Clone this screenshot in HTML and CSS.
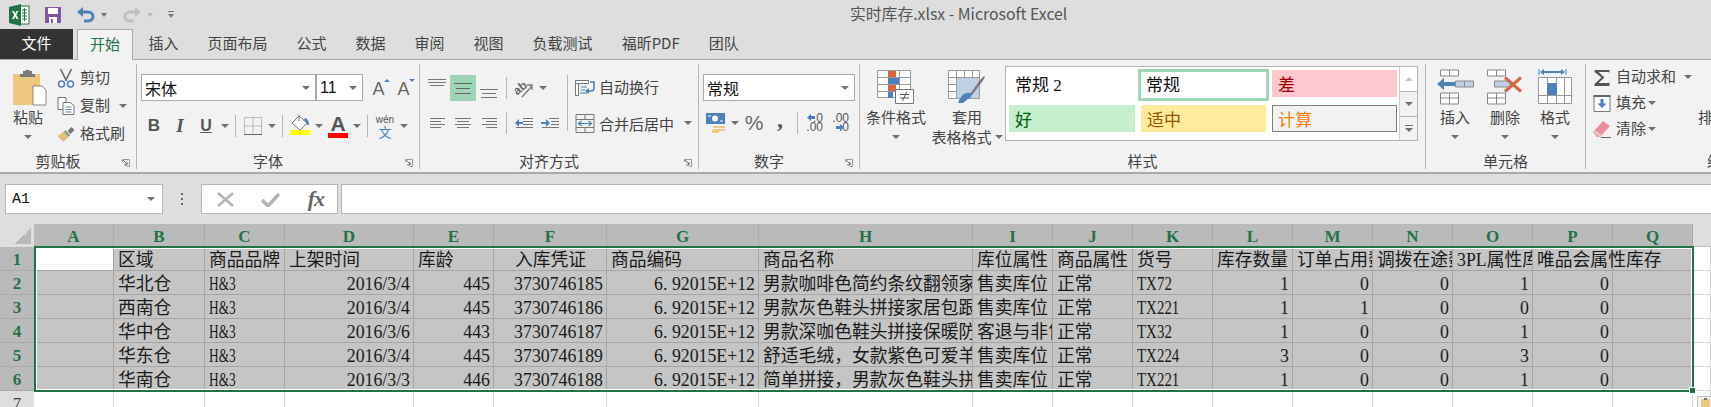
FILE: index.html
```html
<!DOCTYPE html>
<html lang="zh-CN">
<head>
  <meta charset="UTF-8" />
  <title>实时库存.xlsx - Microsoft Excel</title>
  <link rel="stylesheet" href="styles.css">
</head>
<body>
  <svg class="defs" width="0" height="0">
    <symbol id="launch" viewBox="0 0 8 8"><path d="M.5 3V.5H7.5V7.5H5" fill="none" stroke="#999"/><path d="M1 1l4 4M5 3v3H2" fill="none" stroke="#666"/></symbol>
  </svg>

  <header class="titlebar">
    <svg class="qa-excel" width="22" height="22" viewBox="0 0 22 22"><path d="M10 2h10v18H10z" fill="#fff" stroke="#217346"/><path d="M13 6h5M13 9h5M13 12h5M13 15h5M15.5 4v13" stroke="#217346"/><path d="M0 3l12-3v22L0 19z" fill="#217346"/><path d="M3 7l2.2 4L3 15h2l1.3-2.6L7.6 15h2L7.300 11l2.200-4h-2L6.300 9.600 5 7z" fill="#fff"/></svg>
    <svg class="qa-save" width="16" height="16" viewBox="0 0 16 16"><path d="M0 0h16v16H0z" fill="#8456a8"/><path d="M3 1h10v6H3z" fill="#fff"/><path d="M4 10h8v6H4z" fill="#fff"/><path d="M6 12h2v4H6z" fill="#8456a8"/></svg>
    <svg class="qa-undo" width="18" height="16" viewBox="0 0 18 16"><path d="M5 5h6c3 0 5 2 5 4.500S14 14 11 14H7" fill="none" stroke="#4d82b8" stroke-width="3"/><path d="M0 5l6-5v10z" fill="#4d82b8"/></svg>
    <i class="caret qa-caret"></i>
    <svg class="qa-redo" width="18" height="16" viewBox="0 0 18 16"><path d="M13 5H7C4 5 2 7 2 9.500S4 14 7 14h4" fill="none" stroke="#c0c0c0" stroke-width="3"/><path d="M18 5l-6-5v10z" fill="#c0c0c0"/></svg>
    <i class="caret qa-caret qa-caret-off"></i>
    <svg class="qa-custom" width="6" height="7" viewBox="0 0 6 7"><path d="M0 .5h6" stroke="#777"/><path d="M0 3h6L3 7z" fill="#777"/></svg>
    <div class="doc-title">实时库存.xlsx - Microsoft Excel</div>
  </header>

  <nav class="tabs">
    <div class="tab tab-file">文件</div>
    <div class="tab tab-on">开始</div>
    <div class="tab">插入</div>
    <div class="tab">页面布局</div>
    <div class="tab">公式</div>
    <div class="tab">数据</div>
    <div class="tab">审阅</div>
    <div class="tab">视图</div>
    <div class="tab">负载测试</div>
    <div class="tab">福昕PDF</div>
    <div class="tab">团队</div>
  </nav>

  <section class="ribbon">
    <div class="group g-clip">
      <div class="group-body clip-body">
        <div class="big-btn paste-btn">
          <svg width="34" height="38" viewBox="0 0 34 38"><path d="M0 6h27v31H0z" fill="#edc87e"/><path d="M10 3h2a3 3 0 0 1 5 0h2v3h3v3H7V6h3z" fill="#7a7a7a"/><path d="M20 18h9l4 4v15H20z" fill="#fff" stroke="#888"/></svg>
          <span class="big-label">粘贴</span>
          <i class="caret"></i>
        </div>
        <div class="small-col">
          <div class="small-btn">
            <svg width="17" height="19" viewBox="0 0 17 19"><path d="M3 0l6 12M14 0L8 12" stroke="#666" stroke-width="1.600" fill="none"/><circle cx="4" cy="15" r="3" fill="none" stroke="#4d82b8" stroke-width="1.500"/><circle cx="13" cy="15" r="3" fill="none" stroke="#4d82b8" stroke-width="1.500"/></svg>
            <span>剪切</span>
          </div>
          <div class="small-btn">
            <svg width="17" height="18" viewBox="0 0 17 18"><path d="M.5.500h8v12h-8z" fill="#fff" stroke="#777"/><path d="M5.500 5.500h7l4 3v9h-11z" fill="#fff" stroke="#777"/><path d="M8 10h6M8 12.500h6M8 15h6" stroke="#4d82b8"/></svg>
            <span>复制</span><i class="caret copy-caret"></i>
          </div>
          <div class="small-btn">
            <svg width="17" height="15" viewBox="0 0 17 15"><path d="M0 9l6 6 5-5-5-5z" fill="#e2bd7c"/><path d="M6 5l5 5 2-2-5-5z" fill="#999"/><path d="M10 4l4-4 3 3-4 4z" fill="#777"/></svg>
            <span>格式刷</span>
          </div>
        </div>
      </div>
      <div class="group-label has-launcher">剪贴板<svg class="launcher" width="8" height="8"><use href="#launch"/></svg></div>
    </div>

    <div class="group g-font">
      <div class="group-body">
        <div class="font-row">
          <div class="select font-name">宋体<i class="caret"></i></div>
          <div class="select font-size">11<i class="caret"></i></div>
          <span class="grow">A</span>
          <span class="grow grow-down">A</span>
        </div>
        <div class="tool-row">
          <span class="tool t-bold">B</span>
          <span class="tool t-italic">I</span>
          <span class="tool t-under">U</span>
          <span class="tool-caret"><i class="caret"></i></span>
          <span class="vsep"></span>
          <span class="tool"><svg width="18" height="18" viewBox="0 0 18 18"><path d="M.5.500h17v17H.5zM9 .5v17M.5 9h17" fill="none" stroke="#888" stroke-dasharray="1 1"/><path d="M0 17.500h18" stroke="#666"/></svg></span>
          <span class="tool-caret"><i class="caret"></i></span>
          <span class="vsep"></span>
          <span class="tool swatch-tool">
            <svg width="20" height="15" viewBox="0 0 20 15"><path d="M9 1l8 7-7 7-8-7z" fill="#fff" stroke="#777"/><path d="M9 0v6" stroke="#777"/><path d="M15 3c3 1 4 4 4 7h-2c0-2-1-4-3-5z" fill="#4d82b8"/></svg>
            <b class="swatch swatch-yellow"></b>
          </span>
          <span class="tool-caret"><i class="caret"></i></span>
          <span class="tool swatch-tool"><span class="t-color">A</span><b class="swatch swatch-red"></b></span>
          <span class="tool-caret"><i class="caret"></i></span>
          <span class="vsep"></span>
          <span class="tool t-wen"><small>wén</small><span>文</span></span>
          <span class="tool-caret"><i class="caret"></i></span>
        </div>
      </div>
      <div class="group-label has-launcher">字体<svg class="launcher" width="8" height="8"><use href="#launch"/></svg></div>
    </div>

    <div class="group g-align">
      <div class="group-body align-body">
        <div class="align-left">
          <div class="tool-row tool-row-first">
            <span class="tool tool-up"><svg width="18" height="8" viewBox="0 0 18 8"><path d="M0 .5h18M0 3.500h18M2 6.500h14" stroke="#777"/></svg></span>
            <span class="tool tool-on"><svg width="18" height="11" viewBox="0 0 18 11"><path d="M0 .5h18M2 5.500h14M1 10.500h16" stroke="#666"/></svg></span>
            <span class="tool tool-down"><svg width="18" height="10" viewBox="0 0 18 10"><path d="M0 .5h18M2 4.500h14M1 8.500h16" stroke="#777"/></svg></span>
            <span class="vsep"></span>
            <span class="tool"><svg width="19" height="19" viewBox="0 0 19 19"><text x="0" y="13" transform="rotate(-38 6 12)" class="svg-ab">ab</text><path d="M7 18L17 7M12 6h5v5" fill="none" stroke="#777" stroke-width="1.300"/></svg></span>
            <span class="tool-caret"><i class="caret"></i></span>
          </div>
          <div class="tool-row">
            <span class="tool"><svg width="15" height="10" viewBox="0 0 15 10"><path d="M0 .5h15M0 3.500h11M0 6.500h15M0 9.500h11" stroke="#777"/></svg></span>
            <span class="tool"><svg width="16" height="10" viewBox="0 0 16 10"><path d="M0 .5h16M2 3.500h12M0 6.500h16M2 9.500h12" stroke="#777"/></svg></span>
            <span class="tool"><svg width="15" height="10" viewBox="0 0 15 10"><path d="M0 .5h15M4 3.500h11M0 6.500h15M4 9.500h11" stroke="#777"/></svg></span>
            <span class="vsep"></span>
            <span class="tool"><svg width="18" height="10" viewBox="0 0 18 10"><path d="M8 .5h10M8 3.500h10M8 6.500h10M1 9.500h17" stroke="#777"/><path d="M0 5l4-4v3h4v2H4v3z" fill="#4d82b8"/></svg></span>
            <span class="tool"><svg width="18" height="10" viewBox="0 0 18 10"><path d="M8 .5h10M10 3.500h8M10 6.500h8M1 9.500h17" stroke="#777"/><path d="M9 5L5 1v3H0v2h5v3z" fill="#4d82b8"/></svg></span>
          </div>
        </div>
        <span class="vsep vsep-tall"></span>
        <div class="align-right">
          <div class="wide-btn wide-btn-wrap">
            <svg width="20" height="16" viewBox="0 0 20 16"><path d="M.5.500h13v3H.5zM.5 3.500h3v12h-3z" fill="#fff" stroke="#777"/><path d="M6 7h6M6 10h4M5 13h7" stroke="#4d82b8"/><path d="M15 2h4v6c0 2-1 3-3 3h-3" fill="none" stroke="#4d82b8" stroke-width="1.600"/><path d="M10 11l4-3v6z" fill="#4d82b8"/></svg>
            <span>自动换行</span>
          </div>
          <div class="wide-btn">
            <svg width="19" height="19" viewBox="0 0 19 19"><path d="M.5.500h18v18H.5zM.5 5.500h18M.5 13.500h18M9.500.5v5M9.500 13.500v5" fill="none" stroke="#777"/><path d="M3 9.500h13M6 7L3 9.500 6 12M13 7l3 2.500L13 12" fill="none" stroke="#4d82b8" stroke-width="1.200"/></svg>
            <span>合并后居中</span><i class="caret merge-caret"></i>
          </div>
        </div>
      </div>
      <div class="group-label has-launcher">对齐方式<svg class="launcher" width="8" height="8"><use href="#launch"/></svg></div>
    </div>

    <div class="group g-num">
      <div class="group-body">
        <div class="select num-format">常规<i class="caret"></i></div>
        <div class="tool-row">
          <span class="tool"><svg width="20" height="20" viewBox="0 0 20 20"><path d="M0 0h19v11H0z" fill="#4d82b8"/><ellipse cx="9" cy="5.500" rx="3" ry="3" fill="#fff"/><path d="M2 3h3M14 8h3" stroke="#fff"/><path d="M7 13h12v2H7zM7 16h12v2H7z" fill="#edc87e"/><path d="M6 17h7v3H6z" fill="#edc87e"/></svg></span>
          <span class="tool-caret"><i class="caret"></i></span>
          <span class="tool t-percent">%</span>
          <span class="tool t-comma">,</span>
          <span class="vsep"></span>
          <span class="tool t-dec"><span>.0</span><span>.00</span><svg class="dec-arrow dec-arrow-l" width="8" height="7" viewBox="0 0 8 7"><path d="M0 3.500L4 0v2h4v3H4v2z" fill="#4d82b8"/></svg></span>
          <span class="tool t-dec"><span>.00</span><span>.0</span><svg class="dec-arrow dec-arrow-r" width="8" height="7" viewBox="0 0 8 7"><path d="M8 3.500L4 0v2H0v3h4v2z" fill="#4d82b8"/></svg></span>
        </div>
      </div>
      <div class="group-label has-launcher">数字<svg class="launcher" width="8" height="8"><use href="#launch"/></svg></div>
    </div>

    <div class="group g-styles">
      <div class="group-body styles-body">
        <div class="big-btn style-btn">
          <svg width="38" height="34" viewBox="0 0 38 34"><path d="M.5.500h33v27H.5zM.5 7.500h33M.5 14.500h33M.5 21.500h33M11.500.5v27M22.500.5v27" fill="#fff" stroke="#999"/><path d="M11 1h8v6h-8z" fill="#d9653f"/><path d="M11 8h11v6H11z" fill="#4d82b8"/><path d="M11 15h8v6h-8z" fill="#d9653f"/><path d="M11 22h5v6h-5z" fill="#4d82b8"/><path d="M18.500 19.500h18v14h-18z" fill="#fff" stroke="#777"/><path d="M23 24.500h9M23 28h9M29.500 22l-4 9" stroke="#555" fill="none"/></svg>
          <span class="big-label">条件格式</span>
          <i class="caret"></i>
        </div>
        <div class="big-btn style-btn style-btn-table">
          <svg width="38" height="34" viewBox="0 0 38 34"><path d="M.5.500h31v28H.5zM.5 7.500h31M.5 14.500h31M.5 21.500h31M8.500.5v28M16.500.5v28M24.500.5v28" fill="#fff" stroke="#999"/><path d="M9 8h22v20H9z" fill="#bfd0e6"/><path d="M22 24l10-14 4-4 1 1-3 5-10 13z" fill="#7a7a7a"/><path d="M10 33c3-8 7-11 12-10 3 1 2 4-2 6l-5 4z" fill="#4d82b8"/></svg>
          <span class="big-label">套用</span>
          <span class="big-label">表格格式<i class="caret inline-caret"></i></span>
        </div>
        <div class="gallery">
          <div class="style-grid">
            <div class="sty">常规 2</div>
            <div class="sty sty-normal">常规</div>
            <div class="sty sty-bad">差</div>
            <div class="sty sty-good">好</div>
            <div class="sty sty-neutral">适中</div>
            <div class="sty sty-calc">计算</div>
          </div>
          <div class="gallery-scroll">
            <span><i class="caret caret-up"></i></span>
            <span><i class="caret"></i></span>
            <span class="more"><i class="more-bar"></i><i class="caret"></i></span>
          </div>
        </div>
      </div>
      <div class="group-label">样式</div>
    </div>

    <div class="group g-cells">
      <div class="group-body cells-body">
        <div class="big-btn cell-btn">
          <svg width="37" height="35" viewBox="0 0 37 35"><path d="M3.500.5h18v6h-18zM12.500.5v6M3.500 23.500h18v11h-18zM3.500 28.500h18M12.500 23.500v11" fill="#fff" stroke="#888"/><path d="M18.500 11.500h18v6h-18zM27.500 11.500v6" fill="#bfd0e6" stroke="#888"/><path d="M0 14.500l7-6v4h11v4H7v4z" fill="#4d82b8"/></svg>
          <span class="big-label">插入</span>
          <i class="caret"></i>
        </div>
        <div class="big-btn cell-btn">
          <svg width="36" height="35" viewBox="0 0 36 35"><path d="M.5.500h18v6H.5zM9.500.5v6M.5 23.500h18v11H.5zM.5 28.500h18M9.500 23.500v11" fill="#fff" stroke="#888"/><path d="M7.500 11.500h16v6h-16z" fill="#bfd0e6" stroke="#888"/><path d="M18 8l16 14M34 8L18 22" stroke="#d9653f" stroke-width="3"/></svg>
          <span class="big-label">删除</span>
          <i class="caret"></i>
        </div>
        <div class="big-btn cell-btn">
          <svg width="35" height="36" viewBox="0 0 35 36"><path d="M1 0v6M28 0v6" stroke="#4d82b8"/><path d="M5 3h19" stroke="#4d82b8" stroke-width="2"/><path d="M2 3l4-3v6zM27 3l-4-3v6z" fill="#4d82b8"/><path d="M.5 8.500h33v26H.5zM.5 26.500h33M9.500 8.500v26M18.500 8.500v26M26.500 8.500v26" fill="#fff" stroke="#999"/><path d="M9 14h10v12H9z" fill="#4d82b8"/></svg>
          <span class="big-label">格式</span>
          <i class="caret"></i>
        </div>
      </div>
      <div class="group-label">单元格</div>
    </div>

    <div class="group g-edit">
      <div class="group-body edit-body">
        <div class="small-col">
          <div class="small-btn">
            <svg width="17" height="17" viewBox="0 0 17 17"><path d="M1 1h15v3l-1-1H5l6 5.500L5 14h10l1-1v4H1v-2l7-6.500L1 3z" fill="#555"/></svg>
            <span>自动求和</span><i class="caret sum-caret"></i>
          </div>
          <div class="small-btn">
            <svg width="17" height="17" viewBox="0 0 17 17"><path d="M.5.500h16v16H.5z" fill="#fff" stroke="#777"/><path d="M0 0h17v2H0z" fill="#666"/><path d="M8.500 13L4 8.500h3V4h3v4.500h3z" fill="#4d82b8"/></svg>
            <span>填充</span><i class="caret fill-caret"></i>
          </div>
          <div class="small-btn">
            <svg width="18" height="17" viewBox="0 0 18 17"><path d="M0 11L10 0l7 5-10 11H4z" fill="#e98fa0"/><path d="M0 11l7 5 2-2-7-5z" fill="#f3c0ca"/><path d="M8 16.500h10" stroke="#666"/></svg>
            <span>清除</span><i class="caret fill-caret"></i>
          </div>
        </div>
        <span class="sort-label">排序和筛选</span>
      </div>
      <div class="group-label edit-label">编辑</div>
    </div>
  </section>

  <section class="formula-bar">
    <div class="name-box">A1<i class="caret"></i></div>
    <div class="dots"><i></i><i></i><i></i></div>
    <div class="fx-box">
      <svg width="17" height="15" viewBox="0 0 17 15"><path d="M1 1l15 13M16 1L1 14" stroke="#b4b4b4" stroke-width="2.500"/></svg>
      <svg width="19" height="15" viewBox="0 0 19 15"><path d="M1 8l6 6L18 2" fill="none" stroke="#b4b4b4" stroke-width="3.500"/></svg>
      <span class="fx">fx</span>
    </div>
    <div class="formula-input"></div>
  </section>

  <main class="sheet">
    <div class="corner"><i></i></div>
    <div class="col-h">A</div><div class="col-h">B</div><div class="col-h">C</div><div class="col-h">D</div><div class="col-h">E</div><div class="col-h">F</div><div class="col-h">G</div><div class="col-h">H</div><div class="col-h">I</div><div class="col-h">J</div><div class="col-h">K</div><div class="col-h">L</div><div class="col-h">M</div><div class="col-h">N</div><div class="col-h">O</div><div class="col-h">P</div><div class="col-h">Q</div>
    <div class="col-rest"></div>

    <div class="row-h">1</div>
    <div class="c c-active"></div><div class="c">区域</div><div class="c">商品品牌</div><div class="c">上架时间</div><div class="c">库龄</div><div class="c mid">入库凭证</div><div class="c">商品编码</div><div class="c">商品名称</div><div class="c">库位属性</div><div class="c">商品属性</div><div class="c">货号</div><div class="c">库存数量</div><div class="c">订单占用数</div><div class="c">调拨在途数</div><div class="c">3PL属性库存</div><div class="c spill">唯品会属性库存</div><div class="c"></div>
    <div class="e"></div>

    <div class="row-h">2</div>
    <div class="c"></div><div class="c">华北仓</div><div class="c"><span class="lat">H&amp;3</span></div><div class="c num">2016/3/4</div><div class="c num">445</div><div class="c num">3730746185</div><div class="c num">6. 92015E+12</div><div class="c">男款咖啡色简约条纹翻领家居服</div><div class="c">售卖库位</div><div class="c">正常</div><div class="c"><span class="tx">TX72</span></div><div class="c num">1</div><div class="c num">0</div><div class="c num">0</div><div class="c num">1</div><div class="c num">0</div><div class="c"></div>
    <div class="e"></div>

    <div class="row-h">3</div>
    <div class="c"></div><div class="c">西南仓</div><div class="c"><span class="lat">H&amp;3</span></div><div class="c num">2016/3/4</div><div class="c num">445</div><div class="c num">3730746186</div><div class="c num">6. 92015E+12</div><div class="c">男款灰色鞋头拼接家居包跟拖鞋</div><div class="c">售卖库位</div><div class="c">正常</div><div class="c"><span class="tx">TX221</span></div><div class="c num">1</div><div class="c num">1</div><div class="c num">0</div><div class="c num">0</div><div class="c num">0</div><div class="c"></div>
    <div class="e"></div>

    <div class="row-h">4</div>
    <div class="c"></div><div class="c">华中仓</div><div class="c"><span class="lat">H&amp;3</span></div><div class="c num">2016/3/6</div><div class="c num">443</div><div class="c num">3730746187</div><div class="c num">6. 92015E+12</div><div class="c">男款深咖色鞋头拼接保暖防滑拖鞋</div><div class="c">客退与非售卖</div><div class="c">正常</div><div class="c"><span class="tx">TX32</span></div><div class="c num">1</div><div class="c num">0</div><div class="c num">0</div><div class="c num">1</div><div class="c num">0</div><div class="c"></div>
    <div class="e"></div>

    <div class="row-h">5</div>
    <div class="c"></div><div class="c">华东仓</div><div class="c"><span class="lat">H&amp;3</span></div><div class="c num">2016/3/4</div><div class="c num">445</div><div class="c num">3730746189</div><div class="c num">6. 92015E+12</div><div class="c">舒适毛绒，女款紫色可爱羊毛拖鞋</div><div class="c">售卖库位</div><div class="c">正常</div><div class="c"><span class="tx">TX224</span></div><div class="c num">3</div><div class="c num">0</div><div class="c num">0</div><div class="c num">3</div><div class="c num">0</div><div class="c"></div>
    <div class="e"></div>

    <div class="row-h">6</div>
    <div class="c"></div><div class="c">华南仓</div><div class="c"><span class="lat">H&amp;3</span></div><div class="c num">2016/3/3</div><div class="c num">446</div><div class="c num">3730746188</div><div class="c num">6. 92015E+12</div><div class="c">简单拼接，男款灰色鞋头拼接拖鞋</div><div class="c">售卖库位</div><div class="c">正常</div><div class="c"><span class="tx">TX221</span></div><div class="c num">1</div><div class="c num">0</div><div class="c num">0</div><div class="c num">1</div><div class="c num">0</div><div class="c"></div>
    <div class="e"></div>

    <div class="row-h row-h-off">7</div>
    <div class="e"></div><div class="e"></div><div class="e"></div><div class="e"></div><div class="e"></div><div class="e"></div><div class="e"></div><div class="e"></div><div class="e"></div><div class="e"></div><div class="e"></div><div class="e"></div><div class="e"></div><div class="e"></div><div class="e"></div><div class="e"></div><div class="e"></div><div class="e"></div>

    <div class="selection"><i class="sel-handle"></i></div>
    <svg class="paste-tag" width="14" height="11" viewBox="0 0 14 11"><path d="M.5.500h14v11H.5z" fill="#f4f4f4" stroke="#bbb"/><path d="M4 3h9v8H4z" fill="#edc87e"/><path d="M7 2h3v2H7z" fill="#777"/></svg>
  </main>
</body>
</html>
```

FILE: styles.css
```css
* {
  box-sizing: border-box;
}
html, body {
  margin: 0;
  height: 407px;
  overflow: hidden;
}
body {
  font-family: "Noto Sans CJK SC", "Noto Sans", sans-serif;
  font-size: 15px;
  color: #444;
  background: #dedede;
}
i, b {
  display: block;
}
.defs {
  position: absolute;
}

.caret {
  display: block;
  width: 0;
  height: 0;
  border-left: 4px solid transparent;
  border-right: 4px solid transparent;
  border-top: 4px solid #707070;
}
.caret-up {
  border-top: 0;
  border-bottom: 4px solid #c4c4c4;
}

/* title bar */
.titlebar {
  height: 29px;
  display: flex;
  align-items: center;
  padding-left: 9px;
}
.qa-save {
  margin-left: 14px;
}
.qa-undo {
  margin-left: 16px;
}
.qa-caret {
  margin-left: 6px;
  border-left-width: 3px;
  border-right-width: 3px;
}
.qa-caret-off {
  border-top-color: #bbb;
}
.qa-redo {
  margin-left: 16px;
}
.qa-custom {
  margin-left: 15px;
}
.doc-title {
  margin-left: 676px;
  padding-bottom: 2px;
  font-size: 15.800px;
  color: #555;
}

/* tabs */
.tabs {
  height: 31px;
  display: flex;
  border-bottom: 1px solid #ababab;
}
.tab {
  height: 30px;
  line-height: 27px;
  padding: 0 14.500px;
}
.tab-file {
  width: 73px;
  padding: 0;
  margin-right: 4px;
  text-align: center;
  background: #333;
  color: #fff;
}
.tab-on {
  height: 31px;
  padding: 0 12px;
  margin-right: 1px;
  background: #f2f2f2;
  color: #217346;
  border: 1px solid #ababab;
  border-bottom: 0;
  position: relative;
}

/* ribbon */
.ribbon {
  height: 114px;
  display: flex;
  background: #f2f2f2;
  border-bottom: 2px solid #aaa;
  overflow: hidden;
}
.group {
  height: 105px;
  margin-top: 4px;
  display: flex;
  flex-direction: column;
  border-right: 1px solid #b4b4b4;
  flex: none;
  position: relative;
}
.group-body {
  height: 83px;
}
.group-label {
  height: 22px;
  line-height: 28px;
  text-align: center;
}
.has-launcher {
  padding-right: 20px;
}
.launcher {
  position: absolute;
  right: 6px;
  bottom: 2px;
}
.g-clip { width: 137px; }
.g-font { width: 283px; }
.g-align { width: 279px; }
.g-num { width: 161px; }
.g-styles { width: 566px; }
.g-cells { width: 160px; }
.g-edit { flex: 1; border-right: 0; }

.big-btn {
  display: flex;
  flex-direction: column;
  align-items: center;
  flex: none;
}
.big-btn svg {
  height: 38px;
  margin-bottom: 1px;
}
.big-label {
  display: flex;
  align-items: center;
  line-height: 20px;
  white-space: nowrap;
}
.big-btn > .caret {
  margin-top: 8px;
}
.inline-caret {
  margin-left: 3px;
}

.clip-body {
  display: flex;
}
.paste-btn {
  width: 57px;
  padding: 4px 1px 0 0;
}
.paste-btn svg {
  margin-left: 4px;
}
.small-col {
  display: flex;
  flex-direction: column;
  flex: none;
}
.small-btn {
  height: 28px;
  flex: none;
  display: flex;
  align-items: center;
  white-space: nowrap;
}
.small-btn svg {
  width: 18px;
  margin-right: 5px;
}
.small-btn span {
  padding-bottom: 3px;
}
.copy-caret {
  margin-left: 9px;
}
.merge-caret {
  margin-left: 10px;
}
.sum-caret {
  margin-left: 8px;
}
.fill-caret {
  margin-left: 2px;
}

/* font group */
.group-body .select {
  height: 27px;
  background: #fff;
  border: 1px solid #ababab;
  display: flex;
  align-items: center;
  justify-content: space-between;
  padding: 0 5px 0 3px;
  color: #111;
  font-size: 16px;
}
.font-row {
  display: flex;
  align-items: center;
  padding: 10px 0 0 4px;
}
.font-name {
  width: 175px;
}
.font-size {
  width: 47px;
  font-family: "Liberation Sans", sans-serif;
  margin-right: 3px;
}
.grow {
  width: 25px;
  font: 18px "Liberation Sans", sans-serif;
  color: #666;
  text-align: center;
  position: relative;
  top: 2px;
}
.grow::after {
  content: "";
  position: absolute;
  right: 1px;
  top: 0;
  border-left: 3px solid transparent;
  border-right: 3px solid transparent;
  border-bottom: 3px solid #4d82b8;
}
.grow-down::after {
  border-bottom: 0;
  border-top: 3px solid #4d82b8;
}
.tool-row {
  height: 30px;
  display: flex;
  align-items: center;
  padding-left: 4px;
  margin-top: 10px;
}
.tool-row-first {
  margin-top: 0;
}
.tool {
  width: 26px;
  height: 26px;
  flex: none;
  display: flex;
  flex-direction: column;
  align-items: center;
  justify-content: center;
  font-family: "Liberation Sans", sans-serif;
  color: #555;
  position: relative;
}
.tool-caret {
  width: 12px;
  display: flex;
  justify-content: center;
  flex: none;
}
.vsep {
  width: 1px;
  height: 22px;
  margin: 0 4px;
  background: #b4b4b4;
  flex: none;
}
.t-bold {
  font-weight: bold;
  font-size: 17px;
}
.t-italic {
  font-family: "Liberation Serif", serif;
  font-style: italic;
  font-weight: bold;
  font-size: 19px;
}
.t-under {
  font-weight: bold;
  font-size: 16px;
  text-decoration: underline;
}
.swatch-tool svg {
  margin-top: -3px;
}
.swatch {
  width: 20px;
  height: 5px;
}
.swatch-yellow { background: #ff0; }
.swatch-red { background: #f00; }
.t-color {
  font-size: 21px;
  font-weight: bold;
  line-height: 18px;
}
.t-wen {
  line-height: 10px;
}
.t-wen small {
  font-size: 10px;
}
.t-wen span {
  font: 13px/13px "Noto Sans CJK SC", sans-serif;
  color: #4d82b8;
}

/* alignment group */
.align-body {
  display: flex;
  padding-top: 9px;
}
.align-left {
  flex: none;
}
.align-left .tool-row {
  margin-top: 0;
  height: 30px;
}
.align-left .tool-row + .tool-row {
  margin-top: 5px;
}
.tool-on {
  background: #9fd5b7;
}
.tool-up {
  justify-content: flex-start;
  padding-top: 4px;
}
.tool-down {
  justify-content: flex-end;
  padding-bottom: 2px;
}
.svg-ab {
  font: bold 12px "Liberation Sans", sans-serif;
  fill: #666;
}
.vsep-tall {
  height: 56px;
  margin: 2px 4px 0;
}
.align-right {
  padding-left: 3px;
}
.wide-btn {
  height: 30px;
  display: flex;
  align-items: center;
  white-space: nowrap;
}
.wide-btn + .wide-btn {
  margin-top: 5px;
}
.wide-btn svg {
  width: 20px;
  margin-right: 4px;
}
.wide-btn-wrap span {
  padding-bottom: 3px;
}

/* number group */
.num-format {
  width: 152px;
  margin: 10px 0 0 4px;
}
.g-num .tool-row {
  margin-top: 7px;
}
.t-percent {
  font-size: 21px;
  color: #666;
}
.t-comma {
  font: bold 24px/20px "Liberation Serif", serif;
  padding-bottom: 8px;
}
.t-dec {
  font-size: 12px;
  line-height: 9px;
  align-items: flex-end;
  padding-right: 5px;
}
.dec-arrow {
  position: absolute;
}
.dec-arrow-l {
  left: 5px;
  top: 4px;
}
.dec-arrow-r {
  left: 8px;
  top: 14px;
}

/* styles group */
.styles-body {
  display: flex;
}
.style-btn {
  width: 72px;
  padding-top: 4px;
}
.style-btn-table {
  width: 70px;
}
.gallery {
  width: 413px;
  height: 75px;
  margin: 2px 0 0 3px;
  display: flex;
  background: #fff;
  border: 1px solid #b4b4b4;
}
.style-grid {
  width: 394px;
  display: grid;
  grid-template-columns: 126px 131px 125px;
  grid-template-rows: 31px 31px;
  gap: 3px 3px;
  padding: 3px 0 0 3px;
  font-family: "Liberation Serif", "Noto Sans CJK SC", sans-serif;
  font-size: 17px;
  line-height: 31px;
}
.sty {
  padding-left: 6px;
  color: #111;
  height: 29px;
}
.sty-normal {
  border: 3px solid #9fd5b7;
  line-height: 27px;
  height: 32px;
  margin-top: -1px;
  padding-left: 5px;
}
.sty-bad {
  background: #ffc7ce;
  color: #9c0006;
  height: 27px;
  padding-left: 6px;
}
.sty-good {
  background: #c6efce;
  color: #006100;
  height: 27px;
  margin-top: 1px;
}
.sty-neutral {
  background: #ffeb9c;
  color: #9c5700;
  height: 27px;
  margin: 1px 3px 0;
}
.sty-calc {
  background: #f2f2f2;
  color: #fa7d00;
  border: 1px solid #7f7f7f;
  height: 27px;
  line-height: 29px;
  margin-top: 1px;
  padding-left: 5px;
}
.gallery-scroll {
  width: 18px;
  margin-left: auto;
  display: flex;
  flex-direction: column;
  border-left: 1px solid #d0d0d0;
}
.gallery-scroll span {
  height: 25px;
  display: flex;
  flex-direction: column;
  align-items: center;
  justify-content: center;
  background: #f2f2f2;
  border-bottom: 1px solid #b4b4b4;
}
.gallery-scroll span:first-child {
  background: #fff;
}
.gallery-scroll .more {
  border-bottom: 0;
  flex: 1;
}
.more-bar {
  width: 8px;
  height: 1px;
  background: #707070;
  margin-bottom: 2px;
}

/* cells group */
.cells-body {
  display: flex;
  padding: 4px 0 0 4px;
}
.cell-btn {
  width: 50px;
}

/* editing group */
.edit-body {
  display: flex;
  padding: 0 0 0 7px;
  position: relative;
}
.edit-body .small-col {
  width: 105px;
}
.edit-body .small-btn {
  height: 26px;
}
.sort-label {
  white-space: nowrap;
  margin-top: 42px;
}
.edit-label {
  text-align: left;
  padding-left: 121px;
  white-space: nowrap;
}

/* formula bar */
.formula-bar {
  height: 30px;
  margin-top: 10px;
  display: flex;
}
.name-box {
  width: 158px;
  margin-left: 5px;
  background: #fff;
  border: 1px solid #b4b4b4;
  display: flex;
  align-items: center;
  justify-content: space-between;
  padding: 0 7px 0 6px;
  font: 15px "Liberation Mono", monospace;
  color: #111;
}
.dots {
  width: 38px;
  display: flex;
  flex-direction: column;
  align-items: center;
  justify-content: center;
  gap: 3px;
}
.dots i {
  width: 2px;
  height: 2px;
  background: #666;
}
.fx-box {
  width: 137px;
  background: #fff;
  border: 1px solid #b4b4b4;
  display: flex;
  align-items: center;
  justify-content: space-between;
  padding: 0 13px 0 15px;
}
.fx {
  font: italic bold 22px/24px "Liberation Serif", serif;
  color: #666;
  letter-spacing: -1px;
}
.formula-input {
  flex: 1;
  margin-left: 3px;
  background: #fff;
  border: 1px solid #b4b4b4;
  border-right: 0;
}

/* sheet */
.sheet {
  margin-top: 10px;
  height: 183px;
  display: grid;
  grid-template-columns: 34px 80px 91px 80px 129px 80px 113px 152px 214px repeat(9, 80px) 1fr;
  grid-auto-rows: 24px;
  grid-template-rows: 23px;
  position: relative;
  overflow: hidden;
  background: #fff;
  font-family: "Liberation Serif", "Noto Sans CJK SC", serif;
  font-size: 17.800px;
  color: #1a1a1a;
}
.corner {
  background: #dedede;
  position: relative;
}
.corner i {
  position: absolute;
  left: 15px;
  top: 4px;
  width: 16px;
  height: 16px;
  background: linear-gradient(to bottom right, transparent 50%, #b9b9b9 50%);
}
.col-h {
  background: #bababa;
  border-right: 1px solid #aaa;
  color: #217346;
  font-weight: bold;
  font-size: 17px;
  line-height: 26px;
  text-align: center;
}
.col-rest {
  background: #dedede;
  border-bottom: 1px solid #bbb;
}
.row-h {
  background: #bababa;
  border-bottom: 1px solid #aaa;
  color: #217346;
  font-weight: bold;
  font-size: 17px;
  line-height: 26px;
  text-align: center;
}
.row-h-off {
  background: #dedede;
  color: #444;
  font-weight: normal;
}
.c {
  background: #c5c5c5;
  border-right: 1px solid #a6a6a6;
  border-bottom: 1px solid #a6a6a6;
  padding: 0 3px 0 4px;
  line-height: 27px;
  white-space: nowrap;
  overflow: hidden;
}
.c-active {
  background: #fff;
}
.mid {
  text-align: center;
}
.num {
  text-align: right;
}
.lat, .tx {
  display: inline-block;
  transform-origin: left center;
}
.lat {
  transform: scaleX(.75);
}
.tx {
  transform: scaleX(.84);
}
.spill {
  overflow: visible;
  position: relative;
  z-index: 1;
}
.e {
  background: #fff;
  border-right: 1px solid #d4d4d4;
  border-bottom: 1px solid #d4d4d4;
}

/* selected range and paste tag lie over the grid */
.selection {
  position: absolute;
  left: 34px;
  top: 22px;
  width: 1660px;
  height: 146px;
  border: 2px solid #217346;
  box-shadow: inset 0 0 0 1px #fff;
  z-index: 2;
}
.sel-handle {
  position: absolute;
  right: -4px;
  bottom: -4px;
  width: 7px;
  height: 7px;
  background: #217346;
  border: 1px solid #fff;
}
.paste-tag {
  position: absolute;
  left: 1697px;
  top: 172px;
  z-index: 3;
}
```
